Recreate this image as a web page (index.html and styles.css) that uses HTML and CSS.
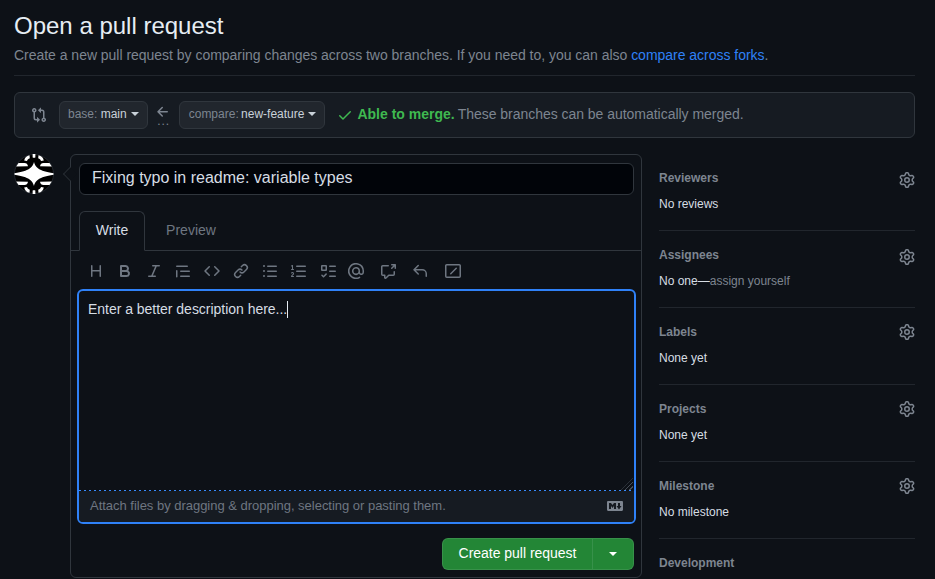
FILE: index.html
```html
<!DOCTYPE html>
<html lang="en">
<head>
<meta charset="utf-8">
<title>Open a pull request</title>
<link rel="stylesheet" href="styles.css">
</head>
<body>
<svg class="sprite" width="0" height="0" aria-hidden="true">
<symbol id="i-compare" viewBox="0 0 16 16"><path d="M9.573.677A.25.25 0 0 1 10 .854V2.5h1A2.5 2.5 0 0 1 13.5 5v5.628a2.251 2.251 0 1 1-1.5 0V5a1 1 0 0 0-1-1h-1v1.646a.25.25 0 0 1-.427.177L7.177 3.427a.25.25 0 0 1 0-.354ZM6 12v-1.646a.25.25 0 0 1 .427-.177l2.396 2.396a.25.25 0 0 1 0 .354l-2.396 2.396A.25.25 0 0 1 6 15.146V13.5H5A2.5 2.5 0 0 1 2.5 11V5.372a2.25 2.25 0 1 1 1.5 0V11a1 1 0 0 0 1 1ZM4 3.25a.75.75 0 1 0-1.5 0 .75.75 0 0 0 1.5 0ZM12.75 12a.75.75 0 1 0 0 1.5.75.75 0 0 0 0-1.5Z"/></symbol>
<symbol id="i-arrow" viewBox="0 0 16 16"><path d="M7.78 12.53a.75.75 0 0 1-1.06 0L2.47 8.28a.75.75 0 0 1 0-1.06l4.25-4.25a.751.751 0 0 1 1.042.018.751.751 0 0 1 .018 1.042L4.81 7h7.44a.75.75 0 0 1 0 1.5H4.81l2.97 2.97a.75.75 0 0 1 0 1.06Z"/></symbol>
<symbol id="i-check" viewBox="0 0 16 16"><path d="M13.78 4.22a.75.75 0 0 1 0 1.06l-7.25 7.25a.75.75 0 0 1-1.06 0L2.22 9.28a.751.751 0 0 1 .018-1.042.751.751 0 0 1 1.042-.018L6 10.94l6.72-6.72a.75.75 0 0 1 1.06 0Z"/></symbol>
<symbol id="i-heading" viewBox="0 0 16 16"><path d="M3.75 2a.75.75 0 0 1 .75.75V7h7V2.75a.75.75 0 0 1 1.5 0v10.5a.75.75 0 0 1-1.5 0V8.5h-7v4.75a.75.75 0 0 1-1.5 0V2.75A.75.75 0 0 1 3.75 2Z"/></symbol>
<symbol id="i-bold" viewBox="0 0 16 16"><path d="M4 2h4.5a3.501 3.501 0 0 1 2.852 5.53A3.499 3.499 0 0 1 9.5 14H4a1 1 0 0 1-1-1V3a1 1 0 0 1 1-1Zm1 7v3h4.5a1.5 1.5 0 0 0 0-3Zm3.5-2a1.5 1.5 0 0 0 0-3H5v3Z"/></symbol>
<symbol id="i-italic" viewBox="0 0 16 16"><path d="M6 2.75A.75.75 0 0 1 6.75 2h6.5a.75.75 0 0 1 0 1.5h-2.505l-3.858 9H9.25a.75.75 0 0 1 0 1.5h-6.5a.75.75 0 0 1 0-1.5h2.505l3.858-9H6.75A.75.75 0 0 1 6 2.75Z"/></symbol>
<symbol id="i-quote" viewBox="0 0 16 16"><path d="M1.75 2.5h10.5a.75.75 0 0 1 0 1.5H1.75a.75.75 0 0 1 0-1.5Zm4 5h8.5a.75.75 0 0 1 0 1.5h-8.5a.75.75 0 0 1 0-1.5Zm0 5h8.5a.75.75 0 0 1 0 1.5h-8.5a.75.75 0 0 1 0-1.5ZM2.5 7.75v6a.75.75 0 0 1-1.5 0v-6a.75.75 0 0 1 1.5 0Z"/></symbol>
<symbol id="i-code" viewBox="0 0 16 16"><path d="m11.28 3.22 4.25 4.25a.75.75 0 0 1 0 1.06l-4.25 4.25a.749.749 0 0 1-1.275-.326.749.749 0 0 1 .215-.734L13.94 8l-3.72-3.72a.749.749 0 0 1 .326-1.275.749.749 0 0 1 .734.215Zm-6.56 0a.751.751 0 0 1 1.042.018.751.751 0 0 1 .018 1.042L2.06 8l3.72 3.72a.749.749 0 0 1-.326 1.275.749.749 0 0 1-.734-.215L.47 8.53a.75.75 0 0 1 0-1.06Z"/></symbol>
<symbol id="i-link" viewBox="0 0 16 16"><path d="m7.775 3.275 1.25-1.25a3.5 3.5 0 1 1 4.95 4.95l-2.5 2.5a3.5 3.5 0 0 1-4.95 0 .751.751 0 0 1 .018-1.042.751.751 0 0 1 1.042-.018 1.998 1.998 0 0 0 2.83 0l2.5-2.5a2.002 2.002 0 0 0-2.83-2.83l-1.25 1.25a.751.751 0 0 1-1.042-.018.751.751 0 0 1-.018-1.042Zm-4.69 9.64a1.998 1.998 0 0 0 2.83 0l1.25-1.25a.751.751 0 0 1 1.042.018.751.751 0 0 1 .018 1.042l-1.25 1.25a3.5 3.5 0 1 1-4.95-4.95l2.5-2.5a3.5 3.5 0 0 1 4.95 0 .751.751 0 0 1-.018 1.042.751.751 0 0 1-1.042.018 1.998 1.998 0 0 0-2.83 0l-2.5 2.5a1.998 1.998 0 0 0 0 2.83Z"/></symbol>
<symbol id="i-ul" viewBox="0 0 16 16"><path d="M5.75 2.5h8.5a.75.75 0 0 1 0 1.5h-8.5a.75.75 0 0 1 0-1.5Zm0 5h8.5a.75.75 0 0 1 0 1.5h-8.5a.75.75 0 0 1 0-1.5Zm0 5h8.5a.75.75 0 0 1 0 1.5h-8.5a.75.75 0 0 1 0-1.5ZM2 14a1 1 0 1 1 0-2 1 1 0 0 1 0 2Zm1-6a1 1 0 1 1-2 0 1 1 0 0 1 2 0ZM2 4a1 1 0 1 1 0-2 1 1 0 0 1 0 2Z"/></symbol>
<symbol id="i-ol" viewBox="0 0 16 16"><path d="M5 3.25a.75.75 0 0 1 .75-.75h8.5a.75.75 0 0 1 0 1.5h-8.5A.75.75 0 0 1 5 3.25Zm0 5a.75.75 0 0 1 .75-.75h8.5a.75.75 0 0 1 0 1.5h-8.5A.75.75 0 0 1 5 8.25Zm0 5a.75.75 0 0 1 .75-.75h8.5a.75.75 0 0 1 0 1.5h-8.5a.75.75 0 0 1-.75-.75ZM.924 10.32a.5.5 0 0 1-.851-.525l.001-.001.001-.002.002-.004.007-.011c.097-.144.215-.273.348-.384.228-.19.588-.392 1.068-.392.468 0 .858.181 1.126.484.259.294.377.673.377 1.038 0 .987-.686 1.495-1.156 1.845l-.047.035c-.303.225-.522.4-.654.597h1.357a.5.5 0 0 1 0 1H.5a.5.5 0 0 1-.5-.5c0-1.005.692-1.52 1.167-1.875l.035-.025c.531-.396.8-.625.8-1.078a.57.57 0 0 0-.128-.376C1.806 10.068 1.695 10 1.5 10a.658.658 0 0 0-.429.163.835.835 0 0 0-.144.153ZM2.003 2.5V6h.503a.5.5 0 0 1 0 1H.5a.5.5 0 0 1 0-1h.503V3.308l-.28.14a.5.5 0 0 1-.446-.895l1.003-.5a.5.5 0 0 1 .723.447Z"/></symbol>
<symbol id="i-task" viewBox="0 0 16 16"><path d="M2 2h4a1 1 0 0 1 1 1v4a1 1 0 0 1-1 1H2a1 1 0 0 1-1-1V3a1 1 0 0 1 1-1Zm4.655 8.595a.75.75 0 0 1 0 1.06L4.03 14.28a.75.75 0 0 1-1.06 0l-1.5-1.5a.749.749 0 0 1 .326-1.275.749.749 0 0 1 .734.215l.97.97 2.095-2.095a.75.75 0 0 1 1.06 0ZM9.75 2.5h5.5a.75.75 0 0 1 0 1.5h-5.5a.75.75 0 0 1 0-1.5Zm0 5h5.5a.75.75 0 0 1 0 1.5h-5.5a.75.75 0 0 1 0-1.5Zm0 5h5.5a.75.75 0 0 1 0 1.5h-5.5a.75.75 0 0 1 0-1.5Zm-7.25-9v3h3v-3Z"/></symbol>
<symbol id="i-mention" viewBox="0 0 16 16"><path d="M4.75 2.37a6.501 6.501 0 0 0 6.5 11.26.75.75 0 0 1 .75 1.298A7.999 7.999 0 0 1 .989 4.148 8 8 0 0 1 16 7.75v1.5a2.75 2.75 0 0 1-5.072 1.475 3.999 3.999 0 0 1-6.65-4.19A4 4 0 0 1 12 8v1.25a1.25 1.25 0 0 0 2.5 0V7.867a6.5 6.5 0 0 0-9.75-5.496ZM10.5 8a2.5 2.5 0 1 0-5 0 2.5 2.5 0 0 0 5 0Z"/></symbol>
<symbol id="i-xref" viewBox="0 0 16 16"><path d="M2.75 3.5a.25.25 0 0 0-.25.25v7.5c0 .138.112.25.25.25h2a.75.75 0 0 1 .75.75v2.19l2.72-2.72a.749.749 0 0 1 .53-.22h4.5a.25.25 0 0 0 .25-.25v-2.5a.75.75 0 0 1 1.5 0v2.5A1.75 1.75 0 0 1 13.25 13H9.06l-2.573 2.573A1.458 1.458 0 0 1 4 14.543V13H2.75A1.75 1.75 0 0 1 1 11.25v-7.5C1 2.784 1.784 2 2.75 2h5.5a.75.75 0 0 1 0 1.5ZM14.5 3.56l-2.22 2.22a.749.749 0 0 1-1.275-.326.749.749 0 0 1 .215-.734L13.44 2.5h-1.69a.75.75 0 0 1 0-1.5h3.5a.75.75 0 0 1 .75.75v3.5a.75.75 0 0 1-1.5 0Z"/></symbol>
<symbol id="i-reply" viewBox="0 0 16 16"><path d="M6.78 1.97a.75.75 0 0 1 0 1.06L3.81 6h6.44A4.75 4.75 0 0 1 15 10.75v2.5a.75.75 0 0 1-1.5 0v-2.5a3.25 3.25 0 0 0-3.25-3.25H3.81l2.97 2.97a.749.749 0 0 1-.326 1.275.749.749 0 0 1-.734-.215L1.47 7.28a.75.75 0 0 1 0-1.06l4.25-4.25a.75.75 0 0 1 1.06 0Z"/></symbol>
<symbol id="i-slash" viewBox="0 0 16 16"><path d="M1.75 1h12.5c.966 0 1.75.784 1.75 1.75v10.5A1.75 1.75 0 0 1 14.25 15H1.75A1.75 1.75 0 0 1 0 13.25V2.75C0 1.784.784 1 1.75 1ZM1.5 2.75v10.5c0 .138.112.25.25.25h12.5a.25.25 0 0 0 .25-.25V2.75a.25.25 0 0 0-.25-.25H1.75a.25.25 0 0 0-.25.25Zm9.22 1.97a.75.75 0 0 1 1.06 1.06l-5.5 5.5a.75.75 0 0 1-1.06-1.06Z"/></symbol>
<symbol id="i-gear" viewBox="0 0 16 16"><path d="M8 0a8.2 8.2 0 0 1 .701.031C9.444.095 9.99.645 10.16 1.29l.288 1.107c.018.066.079.158.212.224.231.114.454.243.668.386.123.082.233.09.299.071l1.103-.303c.644-.176 1.392.021 1.82.63.27.385.506.792.704 1.218.315.675.111 1.422-.364 1.891l-.814.806c-.049.048-.098.147-.088.294.016.257.016.515 0 .772-.01.147.038.246.088.294l.814.806c.475.469.679 1.216.364 1.891a7.977 7.977 0 0 1-.704 1.217c-.428.61-1.176.807-1.82.63l-1.102-.302c-.067-.019-.177-.011-.3.071a5.909 5.909 0 0 1-.668.386c-.133.066-.194.158-.211.224l-.29 1.106c-.168.646-.715 1.196-1.458 1.26a8.006 8.006 0 0 1-1.402 0c-.743-.064-1.289-.614-1.458-1.26l-.289-1.106c-.018-.066-.079-.158-.212-.224a5.738 5.738 0 0 1-.668-.386c-.123-.082-.233-.09-.299-.071l-1.103.303c-.644.176-1.392-.021-1.82-.63a8.12 8.12 0 0 1-.704-1.218c-.315-.675-.111-1.422.363-1.891l.815-.806c.05-.048.098-.147.088-.294a6.214 6.214 0 0 1 0-.772c.01-.147-.038-.246-.088-.294l-.815-.806C.635 6.045.431 5.298.746 4.623a7.92 7.92 0 0 1 .704-1.217c.428-.61 1.176-.807 1.82-.63l1.102.302c.067.019.177.011.3-.071.214-.143.437-.272.668-.386.133-.066.194-.158.211-.224l.29-1.106C6.009.645 6.556.095 7.299.03 7.53.01 7.764 0 8 0Zm-.571 1.525c-.036.003-.108.036-.137.146l-.289 1.105c-.147.561-.549.967-.998 1.189-.173.086-.34.183-.5.29-.417.278-.97.423-1.529.27l-1.103-.303c-.109-.03-.175.016-.195.045-.22.312-.412.644-.573.99-.014.031-.021.11.059.19l.815.806c.411.406.562.957.53 1.456a4.709 4.709 0 0 0 0 .582c.032.499-.119 1.05-.53 1.456l-.815.806c-.081.08-.073.159-.059.19.162.346.353.677.573.989.02.03.085.076.195.046l1.102-.303c.56-.153 1.113-.008 1.53.27.161.107.328.204.501.29.447.222.85.629.997 1.189l.289 1.105c.029.109.101.143.137.146a6.6 6.6 0 0 0 1.142 0c.036-.003.108-.036.137-.146l.289-1.105c.147-.561.549-.967.998-1.189.173-.086.34-.183.5-.29.417-.278.97-.423 1.529-.27l1.103.303c.109.029.175-.016.195-.045.22-.313.411-.644.573-.99.014-.031.021-.11-.059-.19l-.815-.806c-.411-.406-.562-.957-.53-1.456a4.709 4.709 0 0 0 0-.582c-.032-.499.119-1.05.53-1.456l.815-.806c.081-.08.073-.159.059-.19a6.464 6.464 0 0 0-.573-.989c-.02-.03-.085-.076-.195-.046l-1.102.303c-.56.153-1.113.008-1.53-.27a4.44 4.44 0 0 0-.501-.29c-.447-.222-.85-.629-.997-1.189l-.289-1.105c-.029-.11-.101-.143-.137-.146a6.6 6.6 0 0 0-1.142 0ZM11 8a3 3 0 1 1-6 0 3 3 0 0 1 6 0ZM9.5 8a1.5 1.5 0 1 0-3.001.001A1.5 1.5 0 0 0 9.5 8Z"/></symbol>
<symbol id="i-md" viewBox="0 0 16 16"><path d="M14.85 3c.63 0 1.15.52 1.14 1.15v7.7c0 .63-.51 1.15-1.15 1.15H1.15C.52 13 0 12.48 0 11.84V4.15C0 3.52.52 3 1.15 3ZM9 11V5H7L5.5 7 4 5H2v6h2V8l1.5 1.92L7 8v3Zm2.99.5L14.5 8H13V5h-2v3H9.5Z"/></symbol>
<symbol id="i-quad" viewBox="0 0 40 40"><path d="M18.800 0h2.400v3.500h-2.400ZM15.500 1.200C12.500 1.800 10.800 3.500 10.200 6.500L13 7C13.500 5.500 14.300 4.700 15.800 4.200ZM4.500 9H10.500C12.500 9 13.500 10 14 12.200L2.200 12.400Z" fill="#fff"/></symbol>
</svg>

<main class="page">
  <header class="head">
    <h1 class="title">Open a pull request</h1>
    <p class="lead">Create a new pull request by comparing changes across two branches. If you need to, you can also <a class="link" href="#">compare across forks</a>.</p>
  </header>

  <section class="range">
    <svg class="ic range-ic"><use href="#i-compare"/></svg>
    <button class="branch"><span><span class="dim">base:</span> main</span><i class="caret"></i></button>
    <div class="dir"><svg class="ic"><use href="#i-arrow"/></svg><span class="dots">...</span></div>
    <button class="branch branch-head"><span><span class="dim">compare:</span> new-feature</span><i class="caret"></i></button>
    <div class="merge">
      <svg class="ic ok"><use href="#i-check"/></svg>
      <strong class="ok-text">Able to merge.</strong>
      <span class="merge-note">These branches can be automatically merged.</span>
    </div>
  </section>

  <div class="layout">
    <svg class="avatar" viewBox="0 0 40 40" aria-hidden="true">
      <circle cx="20" cy="20" r="19.500" fill="#000" stroke="#21262d"/>
      <path fill="#fff" d="M20 8 C21.500 13.500 24.500 16.800 39.500 19.300 V20.700 C24.500 23.200 21.500 26.500 20 32 C18.500 26.500 15.500 23.200 .5 20.700 V19.300 C15.500 16.800 18.500 13.500 20 8Z"/>
      <use href="#i-quad" width="40" height="40"/>
      <use href="#i-quad" width="40" height="40" transform="matrix(-1 0 0 1 40 0)"/>
      <use href="#i-quad" width="40" height="40" transform="matrix(1 0 0 -1 0 40)"/>
      <use href="#i-quad" width="40" height="40" transform="matrix(-1 0 0 -1 40 40)"/>
    </svg>

    <form class="composer">
      <i class="beak"></i>
      <div class="title-field">Fixing typo in readme: variable types</div>
      <div class="tabs">
        <button type="button" class="tab on">Write</button>
        <button type="button" class="tab">Preview</button>
      </div>
      <div class="tools">
        <svg class="ic"><use href="#i-heading"/></svg>
        <svg class="ic"><use href="#i-bold"/></svg>
        <svg class="ic"><use href="#i-italic"/></svg>
        <svg class="ic"><use href="#i-quote"/></svg>
        <svg class="ic"><use href="#i-code"/></svg>
        <svg class="ic"><use href="#i-link"/></svg>
        <svg class="ic"><use href="#i-ul"/></svg>
        <svg class="ic"><use href="#i-ol"/></svg>
        <svg class="ic"><use href="#i-task"/></svg>
        <svg class="ic tight"><use href="#i-mention"/></svg>
        <svg class="ic wide"><use href="#i-xref"/></svg>
        <svg class="ic wide"><use href="#i-reply"/></svg>
        <svg class="ic wider"><use href="#i-slash"/></svg>
      </div>
      <div class="editor">
        <div class="editor-text">Enter a better description here...<i class="cursor"></i></div>
        <div class="grip"></div>
        <div class="attach">
          <span>Attach files by dragging &amp; dropping, selecting or pasting them.</span>
          <svg class="ic md"><use href="#i-md"/></svg>
        </div>
      </div>
      <div class="actions">
        <div class="split">
          <button type="button" class="create">Create pull request</button>
          <button type="button" class="more"><i class="caret"></i></button>
        </div>
      </div>
    </form>

    <aside class="side">
      <section class="side-item"><div class="side-head low"><h2>Reviewers</h2><svg class="ic"><use href="#i-gear"/></svg></div><p>No reviews</p></section>
      <section class="side-item"><div class="side-head low"><h2>Assignees</h2><svg class="ic"><use href="#i-gear"/></svg></div><p>No one—<span class="dim2">assign yourself</span></p></section>
      <section class="side-item"><div class="side-head"><h2>Labels</h2><svg class="ic"><use href="#i-gear"/></svg></div><p>None yet</p></section>
      <section class="side-item"><div class="side-head"><h2>Projects</h2><svg class="ic"><use href="#i-gear"/></svg></div><p>None yet</p></section>
      <section class="side-item"><div class="side-head"><h2>Milestone</h2><svg class="ic"><use href="#i-gear"/></svg></div><p>No milestone</p></section>
      <section class="side-item"><div class="side-head"><h2>Development</h2></div></section>
    </aside>
  </div>
</main>
</body>
</html>
```

FILE: styles.css
```css
* { box-sizing: border-box; }
html, body { margin: 0; height: 100%; overflow: hidden; }
body {
  background: #0d1117;
  color: #d6dde4;
  font-family: "Liberation Sans", Arial, sans-serif;
  font-size: 14px;
  line-height: 21px;
}
.sprite { position: absolute; }
.ic { width: 16px; height: 16px; fill: #7d8590; flex: none; display: block; }
button { font: inherit; color: inherit; }

.page { padding: 0 20px 0 14px; }

.head { height: 76px; border-bottom: 1px solid #21262d; padding-top: 10px; }
.title { margin: 0; font-size: 24px; line-height: 32px; font-weight: 400; color: #e6edf3; }
.lead { margin: 3px 0 0; color: #7d8590; font-size: 14px; line-height: 21px; letter-spacing: -.024px; }
.link { color: #2f81f7; text-decoration: none; }

.range {
  margin-top: 16px;
  height: 46px;
  background: #161b22;
  border: 1px solid #30363d;
  border-radius: 6px;
  display: flex;
  align-items: center;
  padding-left: 16px;
}
.range-ic { margin-right: 12px; }
.branch {
  height: 28px;
  padding: 0 8px 2px;
  background: #21262d;
  border: 1px solid #30363d;
  border-radius: 6px;
  font-size: 12px;
  line-height: 20px;
  color: #c9d1d9;
  display: flex;
  align-items: center;
  gap: 3px;
  white-space: nowrap;
}
.branch-head { padding-left: 9px; word-spacing: -1px; }
.dim { color: #7d8590; }
.caret {
  display: inline-block;
  width: 0;
  height: 0;
  border: 4px solid transparent;
  border-top-color: currentColor;
  border-bottom: 0;
}
.branch .caret { margin-left: 1px; }
.dir { width: 31px; display: flex; flex-direction: column; align-items: center; padding-top: 1px; }
.dots { color: #7d8590; font-size: 12px; line-height: 8px; height: 10px; letter-spacing: 1px; margin-top: -3px; padding-left: 1px; }
.merge { display: flex; align-items: center; margin-left: 12px; padding-bottom: 2px; color: #7d8590; gap: 4px; white-space: nowrap; }
.merge-note { letter-spacing: -.03px; margin-left: -1px; }
.ok { fill: #3fb950; margin-top: 2px; }
.ok-text { color: #3fb950; font-weight: 700; }

.layout { display: flex; margin-top: 16px; align-items: flex-start; }
.avatar { width: 40px; height: 40px; flex: none; margin-right: 16px; display: block; }

.composer {
  position: relative;
  width: 572px;
  height: 424px;
  flex: none;
  border: 1px solid #30363d;
  border-radius: 6px;
  padding: 8px 7px 8px 8px;
}
.beak {
  position: absolute;
  left: -8px;
  top: 12px;
  width: 14px;
  height: 14px;
  background: #0d1117;
  border-left: 1px solid #30363d;
  border-bottom: 1px solid #30363d;
  transform: rotate(45deg) scale(.7);
}
.title-field {
  height: 32px;
  background: #010409;
  border: 1px solid #30363d;
  border-radius: 6px;
  padding: 0 12px;
  font-size: 16px;
  line-height: 28px;
}
.tabs {
  display: flex;
  margin: 16px -7px 0 -8px;
  padding-left: 8px;
  height: 40px;
  border-bottom: 1px solid #30363d;
}
.tab {
  width: 66px;
  height: 40px;
  background: none;
  border: 1px solid transparent;
  border-radius: 6px 6px 0 0;
  font-size: 14px;
  color: #6e7681;
  padding: 0 0 2px;
  margin-right: 13px;
}
.tab.on { background: #0d1117; border-color: #30363d; border-bottom-color: #0d1117; color: #d6dde4; }
.tools { display: flex; align-items: center; gap: 13px; height: 38px; padding: 2px 0 0 9px; }
.tools .ic { fill: #6e7681; }
.tools .tight { margin-left: -1px; }
.tools .wide { margin-left: 3px; }
.tools .wider { margin-left: 4px; }
.editor {
  position: relative;
  height: 235px;
  margin: 0 -2px;
  border: 2px solid #2f81f7;
  border-radius: 6px;
  display: flex;
  flex-direction: column;
}
.editor-text {
  height: 200px;
  flex: none;
  padding: 8px 9px;
  background: repeating-linear-gradient(90deg, #388bfd 0 2px, transparent 2px 5px) left bottom / 100% 1px no-repeat;
  font-size: 14px;
  letter-spacing: -.024px;
}
.cursor { display: inline-block; width: 1px; height: 17px; background: #e6edf3; vertical-align: -4px; }
.grip {
  position: absolute;
  right: 1px;
  top: 187px;
  width: 12px;
  height: 12px;
  background: repeating-linear-gradient(135deg, transparent 0 2px, #484f58 2px 3px);
  clip-path: polygon(100% 0, 100% 100%, 0 100%);
}
.attach {
  flex: 1;
  background: #161b22;
  border-radius: 0 0 4px 4px;
  color: #6e7681;
  font-size: 13px;
  letter-spacing: -.02px;
  padding: 0 11px 3px 11px;
  display: flex;
  align-items: center;
  justify-content: space-between;
}
.attach .md { fill: #7d8590; margin-top: 2px; }
.actions { display: flex; justify-content: flex-end; margin-top: 14px; }
.split { display: flex; height: 32px; }
.create, .more {
  background: #238636;
  border: 1px solid rgba(240,246,252,.1);
  color: #fff;
  font-size: 14px;
}
.create { width: 150px; border-radius: 6px 0 0 6px; padding: 0 0 2px; border-right: 0; letter-spacing: -.024px; }
.more { width: 42px; border-radius: 0 6px 6px 0; padding: 0; display: flex; align-items: center; justify-content: center; }

.side { width: 256px; margin-left: 17px; flex: none; }
.side-item { height: 77px; border-bottom: 1px solid #21262d; padding-top: 16px; }
.side-item:last-child { border: 0; }
.side-head { display: flex; justify-content: space-between; align-items: flex-start; height: 18px; }
.side-head.low .ic { margin-top: 2px; }
.side h2 { margin: 0; font-size: 12px; line-height: 16px; font-weight: 700; color: #7d8590; }
.side p { margin: 7px 0 0; font-size: 12px; line-height: 18px; }
.dim2 { color: #7d8590; }
```
